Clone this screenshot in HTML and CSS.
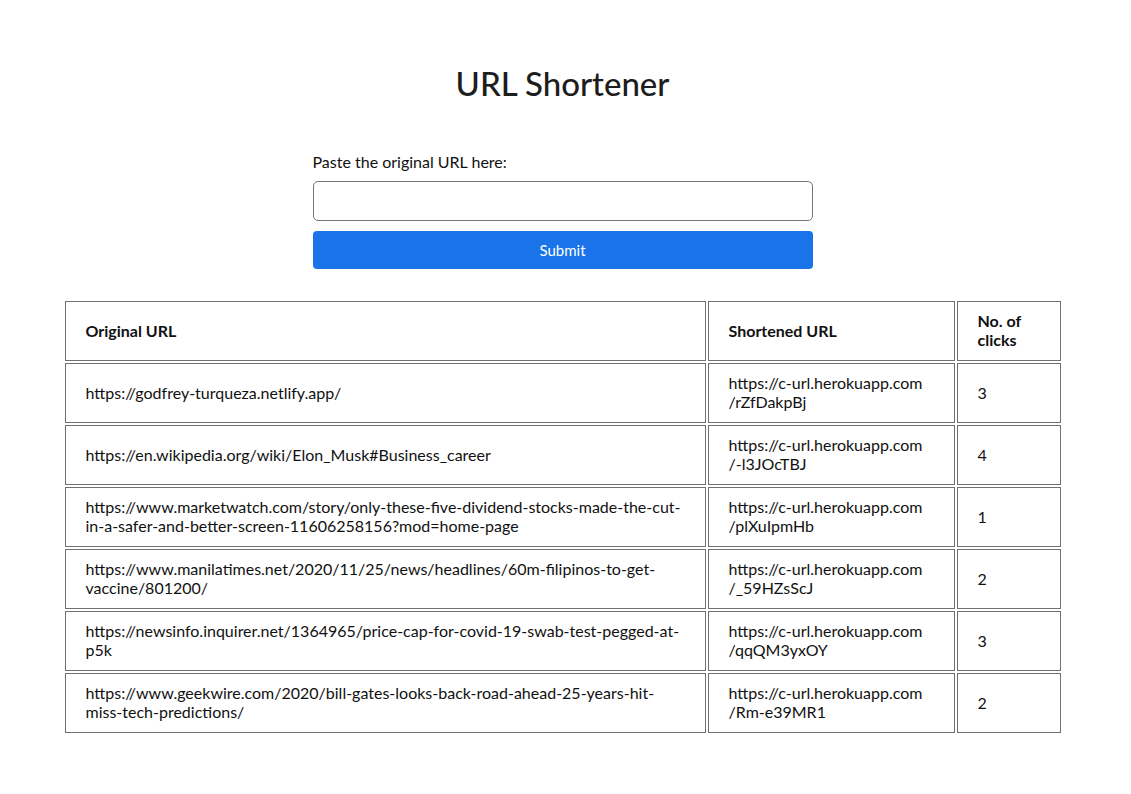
FILE: index.html
```html
<!DOCTYPE html>
<html lang="en">
<head>
<meta charset="utf-8">
<title>URL Shortener</title>
<link rel="stylesheet" href="styles.css">
</head>
<body>
<main class="page">
  <h1 class="title">URL Shortener</h1>
  <form class="form">
    <label class="label" for="url">Paste the original URL here:</label>
    <input class="input" id="url" type="text">
    <button class="submit" type="button">Submit</button>
  </form>
  <table class="urls">
    <thead>
      <tr>
        <th class="c1">Original URL</th>
        <th class="c2">Shortened URL</th>
        <th class="c3">No. of clicks</th>
      </tr>
    </thead>
    <tbody>
      <tr><td>https://godfrey-turqueza.netlify.app/</td><td>https://c-url.herokuapp.com<wbr>/rZfDakpBj</td><td>3</td></tr>
      <tr><td>https://en.wikipedia.org/wiki/Elon_Musk#Business_career</td><td>https://c-url.herokuapp.com<wbr>/-l3JOcTBJ</td><td>4</td></tr>
      <tr><td>https://www.marketwatch.com/story/only-these-five-dividend-stocks-made-the-cut-in-a-safer-and-better-screen-11606258156?mod=home-page</td><td>https://c-url.herokuapp.com<wbr>/plXuIpmHb</td><td>1</td></tr>
      <tr><td>https://www.manilatimes.net/2020/11/25/news/headlines/60m-filipinos-to-get-vaccine/801200/</td><td>https://c-url.herokuapp.com<wbr>/_59HZsScJ</td><td>2</td></tr>
      <tr><td>https://newsinfo.inquirer.net/1364965/price-cap-for-covid-19-swab-test-pegged-at-p5k</td><td>https://c-url.herokuapp.com<wbr>/qqQM3yxOY</td><td>3</td></tr>
      <tr><td>https://www.geekwire.com/2020/bill-gates-looks-back-road-ahead-25-years-hit-miss-tech-predictions/</td><td>https://c-url.herokuapp.com<wbr>/Rm-e39MR1</td><td>2</td></tr>
    </tbody>
  </table>
</main>
</body>
</html>
```
FILE: styles.css
```css
html, body {
  margin: 0;
  padding: 0;
  background: #fff;
}
body {
  font-family: Lato, "Open Sans", Arial, sans-serif;
  font-size: 16px;
  color: #111;
}
.page {
  padding: 7px 6px 8px 0;
}
.title {
  margin: 56px 0 0;
  text-align: center;
  font-size: 33px;
  font-weight: 500;
  line-height: 40px;
  color: #1d1d1d;
}
.form {
  width: 500px;
  margin: 49px auto 0;
  display: flex;
  flex-direction: column;
}
.label {
  line-height: 19px;
  margin-bottom: 10px;
}
.input {
  box-sizing: border-box;
  height: 40px;
  border: 1px solid #767676;
  border-radius: 5px;
  padding: 0 10px;
  font: inherit;
  margin: 0;
}
.submit {
  box-sizing: border-box;
  margin-top: 10px;
  height: 38px;
  border: none;
  border-radius: 4px;
  background: #1a73e8;
  color: #fff;
  font: inherit;
  font-size: 15px;
}
.urls {
  width: 1000px;
  margin: 30px auto 0;
  border-collapse: separate;
  border-spacing: 2px;
  table-layout: fixed;
}
.urls th, .urls td {
  box-sizing: border-box;
  border: 1px solid #707070;
  padding: 9px 20px 11px;
  text-align: left;
  vertical-align: middle;
  height: 60px;
  line-height: 19px;
}
.urls th {
  font-weight: bold;
}
.c1 { width: 641px; }
.c2 { width: 247px; }
.c3 { width: 104px; }
```
